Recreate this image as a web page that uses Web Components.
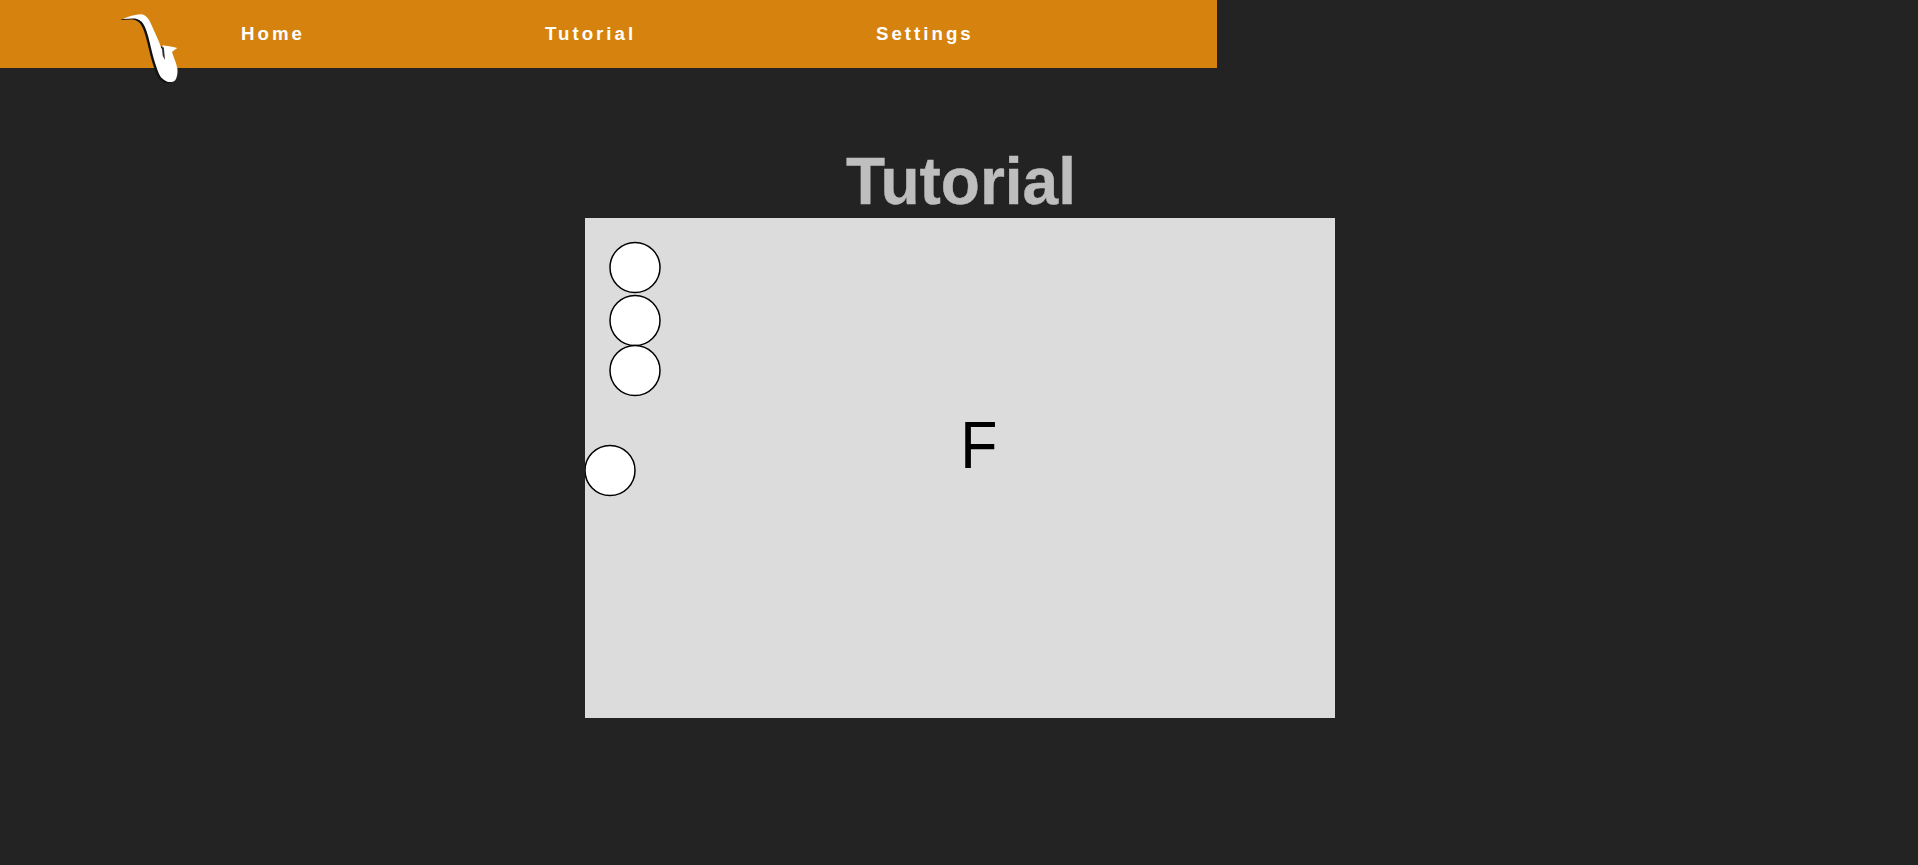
<!DOCTYPE html>
<html lang="en"><head><meta charset="utf-8"><title>Tutorial</title>
<style>
html,body{margin:0;padding:0;height:100%;background:#232323;overflow:hidden}
body{font-family:"Liberation Sans",Arial,sans-serif}
</style></head><body>
<app-nav>
  <nav-link>Home</nav-link>
  <nav-link>Tutorial</nav-link>
  <nav-link>Settings</nav-link>
</app-nav>
<page-title>Tutorial</page-title>
<finger-chart note="F">
  <finger-key style="left:24px;top:23px"></finger-key>
  <finger-key style="left:24px;top:76px"></finger-key>
  <finger-key style="left:24px;top:126px"></finger-key>
  <finger-key style="left:-1px;top:226px"></finger-key>
</finger-chart>
<script>
function def(name,html){
  customElements.define(name,class extends HTMLElement{
    constructor(){super();this.attachShadow({mode:'open'}).innerHTML=html;}
    connectedCallback(){
      const n=this.getAttribute('note');
      if(n)this.shadowRoot.querySelector('.note').textContent=n;
    }
  });
}
const sax="M122.500 19C128 16.500 135 14.500 141 14.300C146 14.500 149 19 151.500 25C155 33 159 41 161.700 49L162.800 45.200C166 45.800 172 46.500 177.300 48C175.500 49.500 173.500 50.500 172 52C173 56 176 62 177.300 68C178 73 177 78 175 80.500C172.500 82.500 168 82.500 165 80.500C162 79 159.500 76 158 71.500C156 66 154 60 152.500 54C150.500 46 149 38 146.500 31C144.500 25 142 20.500 137 19C133 18 128 19 122.500 19Z";
def('app-nav',`<style>
:host{display:block;position:relative;width:1217px;height:68px;background:#d5830e}
.links{display:grid;grid-template-columns:304px 331px auto;justify-content:start;align-items:center;height:68px;padding-left:241px;box-sizing:border-box}
svg{position:absolute;left:118px;top:10px;overflow:visible}
</style>
<svg width="66" height="76" viewBox="118 10 66 76" aria-hidden="true">
  <path fill="#111" transform="translate(-2.200 1)" d="${sax}"/>
  <path fill="#fff" d="${sax}"/>
  <path fill="#2a2a2a" d="M161.800 47L163.800 47.500L165 60L162.800 56Z"/>
</svg>
<div class="links"><slot></slot></div>`);
def('nav-link',`<style>
:host{display:block;color:#fff;font:700 18.7px/22px "Liberation Sans",Arial,sans-serif;letter-spacing:3px;white-space:nowrap}
</style><slot></slot>`);
def('page-title',`<style>
:host{display:block;margin-top:75px;height:75px;text-align:center;color:#bebebe;font:700 64px/78px "Liberation Sans",Arial,sans-serif}
span{display:inline-block;-webkit-text-stroke:.4px #bebebe;transform:scaleY(1.04);transform-origin:0 62px;margin-left:4px}
</style><span><slot></slot></span>`);
def('finger-chart',`<style>
:host{display:block;position:relative;width:750px;height:500px;margin-left:585px;background:#dcdcdc;overflow:hidden}
.note{position:absolute;left:375px;top:191px;color:#000;font:400 64px/74px "Liberation Sans",Arial,sans-serif;transform:scale(.95,1.04);transform-origin:5px 59px}
</style><div class="note"></div><slot></slot>`);
def('finger-key',`<style>
:host{display:block;position:absolute;width:52px;height:53px}
svg{display:block;overflow:visible}
</style><svg width="52" height="53" viewBox="0 0 52 53" aria-hidden="true"><circle cx="26" cy="26.500" r="25" fill="#fff" stroke="#000" stroke-width="1.500"/></svg>`);
</script>
</body></html>
